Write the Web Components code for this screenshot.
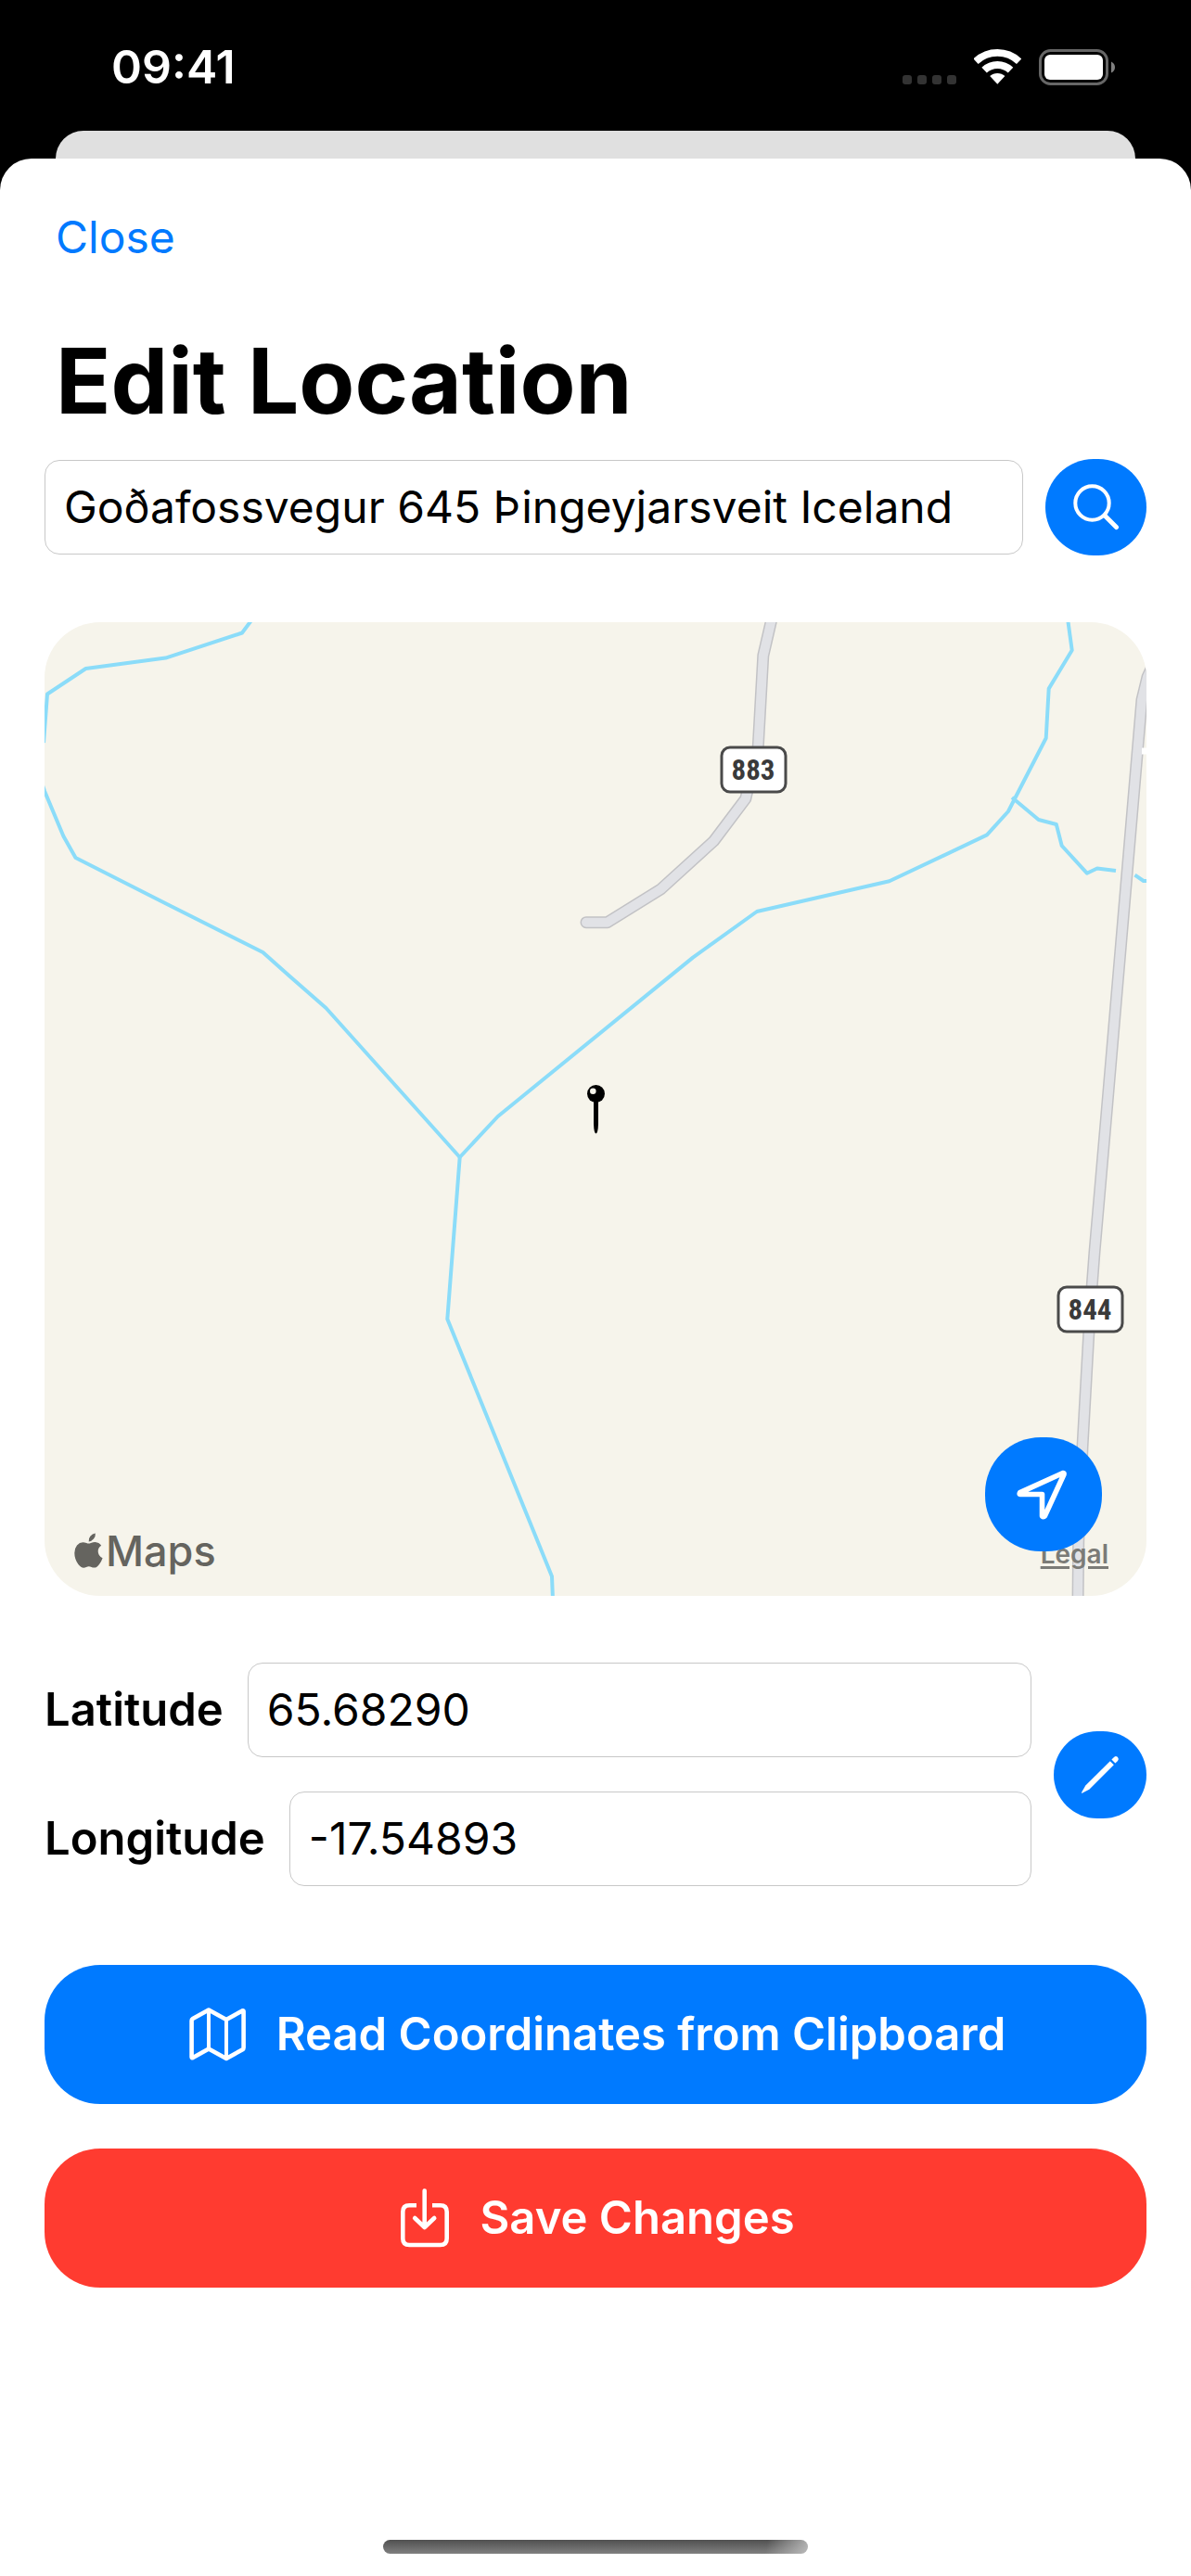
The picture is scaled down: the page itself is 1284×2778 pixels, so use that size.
<!DOCTYPE html>
<html lang="en">
<head>
<meta charset="utf-8">
<meta name="viewport" content="width=device-width, initial-scale=1">
<title>Edit Location</title>
<style>
  html {
    background-color: black;
  }

  body {
    color: black;
    font-family: Inter, Roboto, "Liberation Sans", sans-serif;
    font-size: 49px;
    line-height: 60px;
    margin: 0;
    padding: 0;
  }
</style>
</head>
<body>

<location-editor></location-editor>

<script>
// Icons
// Shared by the buttons
const ICONS = {
  search: `
    <svg width="50" height="50" viewBox="0 0 50 50" fill="none" stroke="currentColor" stroke-linecap="round">
      <circle cx="20.500" cy="20.500" r="18.200" stroke-width="4"/>
      <path d="M34 34 L46.500 46.500" stroke-width="5"/>
    </svg>`,
  location: `
    <svg width="58" height="54" viewBox="0 0 58 54" fill="none" stroke="currentColor" stroke-width="5.600" stroke-linecap="round" stroke-linejoin="round">
      <path d="M50 3.500 L3.600 24.600 Q2.500 26.500 4 26.500 H27.500 V50 Q29 51.500 30.300 50 L51 5 Q51.500 3.300 50 3.500 Z"/>
    </svg>`,
  pencil: `
    <svg width="42" height="42" viewBox="0 0 42 42" fill="currentColor">
      <path d="M31.800 6.200 L35.800 10.200 L9.300 36.700 L1.600 40.800 Q.600 41 1 40 L5.300 32.600 Z"/>
      <path d="M33.400 4.600 L36 2 Q38 .200 40 2.100 Q41.800 4 40 6 L37.400 8.600 Z"/>
    </svg>`,
  map: `
    <svg width="62" height="60" viewBox="0 0 62 60" fill="none" stroke="currentColor" stroke-width="4.600" stroke-linecap="round" stroke-linejoin="round">
      <path d="M21 3.500 L3.800 13 Q2.600 13.700 2.600 15 V54.300 Q2.700 55.700 4 55 L21 45.500 L40 56 L57.500 46.200 Q58.600 45.500 58.600 44.200 V5 Q58.500 3.800 57.200 4.400 L40 14 Z"/>
      <path d="M21 4 V45 M40 14 V55" stroke-width="4"/>
    </svg>`,
  save: `
    <svg width="54" height="64" viewBox="0 0 54 64" fill="none" stroke="currentColor" stroke-width="4.600" stroke-linejoin="round">
      <path d="M18 18.200 H10.300 Q3.300 18.200 3.300 25.200 V54 Q3.300 61 10.300 61 H43.700 Q50.700 61 50.700 54 V25.200 Q50.700 18.200 43.700 18.200 H35"/>
      <path d="M26.700 2.500 V42 M16.200 32 L26.700 42 L37.200 32" stroke-linecap="round"/>
    </svg>`
};

// Status bar
// Time, signal, wifi, battery
class StatusBar extends HTMLElement {
  constructor() {
    super();

    const template = document.createElement( 'template' );
    template.innerHTML = `
    <style>
    :host {
      align-items: center;
      color: white;
      display: flex;
      flex-direction: row;
      justify-content: space-between;
      padding: 42px 82px 39px 120px;
    }

    time {
      font-size: 50px;
      font-weight: 600;
    }

    div {
      align-items: flex-end;
      display: flex;
      gap: 19px;
    }

    svg {
      display: block;
    }
    </style>
    <time><slot></slot></time>
    <div>
      <svg width="58" height="11" viewBox="0 0 58 11" fill="#333333">
        <rect x="0" width="10" height="10" rx="3"/>
        <rect x="16" width="10" height="10" rx="3"/>
        <rect x="32" width="10" height="10" rx="3"/>
        <rect x="48" width="10" height="10" rx="3"/>
      </svg>
      <svg width="51" height="39" viewBox="0 0 51 39" fill="none" stroke="white">
        <path d="M2 13.200 A33.800 33.800 0 0 1 48.600 13.200" stroke-width="7.600"/>
        <path d="M11.100 22.700 A20.700 20.700 0 0 1 39.500 22.700" stroke-width="8"/>
        <path d="M25.300 37.700 L17.200 29.100 A11.800 11.800 0 0 1 33.400 29.100 Z" fill="white" stroke="none"/>
      </svg>
      <svg width="82" height="39" viewBox="0 0 82 39">
        <rect x="1.500" y="1.500" width="72" height="36" rx="11" fill="none" stroke="#666666" stroke-width="3"/>
        <rect x="6" y="6" width="63" height="27" rx="6" fill="white"/>
        <path d="M78 13.500 Q82 15.500 82 19.500 Q82 23.500 78 25.500 Z" fill="#808080"/>
      </svg>
    </div>
    `;

    this._shadowRoot = this.attachShadow( {mode: 'open'} );
    this._shadowRoot.appendChild( template.content.cloneNode( true ) );
  }
}

window.customElements.define( 'status-bar', StatusBar );

// Modal sheet
// Sits over the edge of the previous card
class ModalSheet extends HTMLElement {
  constructor() {
    super();

    const template = document.createElement( 'template' );
    template.innerHTML = `
    <style>
    :host {
      display: flex;
      flex-direction: column;
      flex-grow: 1;
    }

    .behind {
      background-color: #e0e0e0;
      border-radius: 30px 30px 0 0;
      height: 64px;
      margin: 0 60px -34px 60px;
    }

    .sheet {
      background-color: white;
      border-radius: 34px 34px 0 0;
      display: flex;
      flex-direction: column;
      flex-grow: 1;
      padding: 55px 48px 24px 48px;
      position: relative;
    }

    header {
      display: flex;
      flex-direction: column;
      align-items: flex-start;
      gap: 65px;
      padding: 0 12px 24px 12px;
    }

    button {
      background: none;
      border: none;
      color: #007aff;
      cursor: pointer;
      font: inherit;
      font-size: 48px;
      margin: 0;
      padding: 0;
    }

    h1 {
      font-size: 98px;
      font-weight: 700;
      line-height: 120px;
      margin: 0;
    }
    </style>
    <div class="behind"></div>
    <div class="sheet">
      <header>
        <button type="button">Close</button>
        <h1></h1>
      </header>
      <slot></slot>
    </div>
    `;

    this._shadowRoot = this.attachShadow( {mode: 'open'} );
    this._shadowRoot.appendChild( template.content.cloneNode( true ) );

    this.$heading = this._shadowRoot.querySelector( 'h1' );
    this.$close = this._shadowRoot.querySelector( 'button' );
    this.$close.addEventListener( 'click', () => {
      this.dispatchEvent( new CustomEvent( 'close' ) );
    } );
  }

  static get observedAttributes() {
    return ['heading'];
  }

  attributeChangedCallback( name, oldValue, newValue ) {
    this.$heading.textContent = newValue;
  }
}

window.customElements.define( 'modal-sheet', ModalSheet );

// Round button
// Size comes from --width and --height
class RoundButton extends HTMLElement {
  constructor() {
    super();

    const template = document.createElement( 'template' );
    template.innerHTML = `
    <style>
    :host {
      display: block;
      flex-shrink: 0;
    }

    button {
      align-items: center;
      background-color: #007aff;
      border: none;
      border-radius: 60px;
      color: white;
      cursor: pointer;
      display: flex;
      height: var( --height, 104px );
      justify-content: center;
      padding: 0;
      width: var( --width, 109px );
    }

    svg {
      display: block;
    }
    </style>
    <button type="button"></button>
    `;

    this._shadowRoot = this.attachShadow( {mode: 'open'} );
    this._shadowRoot.appendChild( template.content.cloneNode( true ) );
    this.$button = this._shadowRoot.querySelector( 'button' );
  }

  static get observedAttributes() {
    return ['icon', 'label'];
  }

  attributeChangedCallback( name, oldValue, newValue ) {
    switch( name ) {
      case 'icon':
        this.$button.innerHTML = ICONS[newValue];
        break;
      case 'label':
        this.$button.setAttribute( 'aria-label', newValue );
        break;
    }
  }
}

window.customElements.define( 'round-button', RoundButton );

// Action button
// Full width, icon and text
class ActionButton extends HTMLElement {
  constructor() {
    super();

    const template = document.createElement( 'template' );
    template.innerHTML = `
    <style>
    :host {
      display: block;
    }

    button {
      align-items: center;
      background-color: var( --action-color, #007aff );
      border: none;
      border-radius: 60px;
      box-sizing: border-box;
      color: white;
      cursor: pointer;
      display: flex;
      font: inherit;
      font-weight: 600;
      gap: 32px;
      justify-content: center;
      min-height: 150px;
      padding: 24px 48px 24px 52px;
      width: 100%;
    }

    .icon {
      display: flex;
    }
    </style>
    <button type="button">
      <span class="icon"></span>
      <slot></slot>
    </button>
    `;

    this._shadowRoot = this.attachShadow( {mode: 'open'} );
    this._shadowRoot.appendChild( template.content.cloneNode( true ) );
    this.$icon = this._shadowRoot.querySelector( '.icon' );
  }

  static get observedAttributes() {
    return ['icon'];
  }

  attributeChangedCallback( name, oldValue, newValue ) {
    this.$icon.innerHTML = ICONS[newValue];
  }
}

window.customElements.define( 'action-button', ActionButton );

// Text field
// Visible label, or aria-label when "hide-label" is set
class TextField extends HTMLElement {
  constructor() {
    super();

    const template = document.createElement( 'template' );
    template.innerHTML = `
    <style>
    :host {
      align-items: center;
      display: flex;
      flex-direction: row;
      gap: 26px;
      min-width: 0;
    }

    :host( [hide-label] ) label {
      display: none;
    }

    label {
      font-weight: 600;
    }

    input {
      background-color: white;
      border: solid 1px #c8c8c8;
      border-radius: 16px;
      box-sizing: border-box;
      color: inherit;
      flex-grow: 1;
      font: inherit;
      font-size: 48px;
      margin: 0;
      min-width: 0;
      outline: none;
      padding: 20px;
      width: 0;
    }
    </style>
    <label for="field"></label>
    <input id="field" type="text">
    `;

    this._shadowRoot = this.attachShadow( {mode: 'open'} );
    this._shadowRoot.appendChild( template.content.cloneNode( true ) );
    this.$label = this._shadowRoot.querySelector( 'label' );
    this.$input = this._shadowRoot.querySelector( 'input' );
  }

  static get observedAttributes() {
    return ['label', 'value'];
  }

  attributeChangedCallback( name, oldValue, newValue ) {
    switch( name ) {
      case 'label':
        this.$label.textContent = newValue;
        this.$input.setAttribute( 'aria-label', newValue );
        break;
      case 'value':
        this.value = newValue;
        break;
    }
  }

  get value() {
    return this.$input.value;
  }

  set value( text ) {
    this.$input.value = text;
  }
}

window.customElements.define( 'text-field', TextField );

// Map
// Slotted content floats in the bottom right corner
class LocationMap extends HTMLElement {
  constructor() {
    super();

    const template = document.createElement( 'template' );
    template.innerHTML = `
    <style>
    :host {
      aspect-ratio: 1188 / 1050;
      background-color: #f6f4eb;
      border-radius: 60px;
      display: block;
      overflow: hidden;
      position: relative;
    }

    .map {
      display: block;
      height: 100%;
      width: 100%;
    }

    .shield {
      fill: #3a3a3a;
      font-family: "Liberation Sans Narrow", "Roboto Condensed", Roboto, sans-serif;
      font-size: 31px;
      font-weight: 700;
    }

    .brand {
      align-items: center;
      bottom: 18px;
      color: #65645f;
      display: flex;
      font-size: 45px;
      font-weight: 500;
      gap: 1px;
      left: 32px;
      position: absolute;
    }

    a {
      bottom: 25px;
      color: #7b7b77;
      font-size: 28px;
      font-weight: 600;
      line-height: 40px;
      position: absolute;
      right: 41px;
      text-decoration-thickness: 3px;
      text-underline-offset: 3px;
    }

    .action {
      bottom: 48px;
      position: absolute;
      right: 48px;
    }
    </style>
    <svg class="map" viewBox="0 0 1188 1050" preserveAspectRatio="xMidYMid slice">
      <g fill="none" stroke="#8bdcf9" stroke-width="4" stroke-linejoin="round">
        <path d="M226 -6 L213 11.500 L130.500 38.600 L44.500 50 L3 77.500 L-1 130"/>
        <path d="M-2 176 L0 182 L20.400 230.700 L33.500 254 L130 303 L235.400 356 L264 381.600 L303.400 416 L447.700 577"/>
        <path d="M447.700 577 L488.700 533 L699 361.600 L768 312 L910.800 279.300 L1016 229.400 L1039 204 L1045.400 191.500 L1079.700 125 L1082.700 71.600 L1107.700 30.300 L1103 -4"/>
        <path d="M1043 189 L1071.700 213 L1090.800 218 L1096.700 241 L1123.800 270.700 L1134.800 265.500 L1155 268"/>
        <path d="M1175.500 272.700 L1184.800 279 L1192 279"/>
        <path d="M447.700 577 L434.300 751.400 L547 1029 L548 1054"/>
      </g>
      <g fill="none" stroke="#c2c2c5" stroke-width="13" stroke-linecap="round" stroke-linejoin="round">
        <path d="M785 -8 L774.800 36 L769.300 134 L763 160 L755.800 190.400 L721.500 236 L664.300 288 L606.700 323.700 H584"/>
        <path d="M1200 36 L1189 59 L1183 83.700 L1145 529 L1132 679 L1129.300 715 L1125.800 767 L1119 889 L1114.700 992 L1114 1060"/>
      </g>
      <g fill="none" stroke="#e1e2e6" stroke-width="10" stroke-linecap="round" stroke-linejoin="round">
        <path d="M785 -8 L774.800 36 L769.300 134 L763 160 L755.800 190.400 L721.500 236 L664.300 288 L606.700 323.700 H584"/>
        <path d="M1200 36 L1189 59 L1183 83.700 L1145 529 L1132 679 L1129.300 715 L1125.800 767 L1119 889 L1114.700 992 L1114 1060"/>
      </g>
      <path d="M1183 139 H1192" stroke="white" stroke-width="7"/>
      <g fill="white" stroke="#4a4a4a" stroke-width="3">
        <rect x="730" y="135" width="69" height="48" rx="9"/>
        <rect x="1093" y="717" width="69" height="48" rx="9"/>
      </g>
      <text class="shield" x="764" y="170" text-anchor="middle">883</text>
      <text class="shield" x="1127" y="752" text-anchor="middle">844</text>
      <path d="M592 514 H597 V541 Q596.600 551.500 594.500 551.500 Q592.400 551.500 592 541 Z"/>
      <circle cx="594.500" cy="508.500" r="9.500"/>
      <circle cx="591.300" cy="505.700" r="3.300" fill="#f6f4eb"/>
    </svg>
    <div class="brand">
      <svg width="33" height="40" viewBox="0 0 33 40" fill="currentColor">
        <path d="M15.700 9.400 Q15.200 6 17.500 3.400 Q19.600 1 22.800 .500 Q23.200 3.800 21 6.600 Q18.800 9.300 15.700 9.400 Z"/>
        <path d="M29.200 13.700 Q25.600 16 25.700 20 Q25.900 25.400 30.600 27.200 Q29.400 30.800 27 34 Q24.500 37.700 21.400 37.600 Q20 37.600 18.600 36.900 Q15.800 35.700 13 36.900 Q11.500 37.600 10.200 37.700 Q7.200 37.700 4.400 34 Q.300 28.500 .300 21.800 Q.300 16.600 3 13.400 Q5.700 10.300 9.400 10.200 Q11.200 10.200 13.200 11 Q15.600 12 17.900 11 Q20.500 10 22.600 10 Q26.800 10.400 29.200 13.700 Z"/>
      </svg>
      <span>Maps</span>
    </div>
    <a href="#legal">Legal</a>
    <div class="action"><slot></slot></div>
    `;

    this._shadowRoot = this.attachShadow( {mode: 'open'} );
    this._shadowRoot.appendChild( template.content.cloneNode( true ) );
  }
}

window.customElements.define( 'location-map', LocationMap );

// Home indicator
class HomeIndicator extends HTMLElement {
  constructor() {
    super();

    const template = document.createElement( 'template' );
    template.innerHTML = `
    <style>
    :host {
      display: flex;
      justify-content: center;
      margin-top: auto;
    }

    div {
      background-image:
        linear-gradient( 100deg, transparent 90%, rgba( 200, 200, 200, 0.8 ) ),
        linear-gradient( #505050, #808080 );
      border-radius: 8px;
      height: 15px;
      width: 458px;
    }
    </style>
    <div></div>
    `;

    this._shadowRoot = this.attachShadow( {mode: 'open'} );
    this._shadowRoot.appendChild( template.content.cloneNode( true ) );
  }
}

window.customElements.define( 'home-indicator', HomeIndicator );

// Editor
// The whole screen
class LocationEditor extends HTMLElement {
  constructor() {
    super();

    const template = document.createElement( 'template' );
    template.innerHTML = `
    <style>
    :host {
      display: flex;
      flex-direction: column;
      min-height: 100vh;
    }

    .search {
      align-items: center;
      display: flex;
      gap: 24px;
    }

    .search text-field {
      flex-grow: 1;
    }

    location-map {
      margin: 72px 0;
    }

    location-map round-button {
      --height: 123px;
      --width: 126px;
    }

    .coordinates {
      align-items: center;
      display: flex;
      gap: 24px;
    }

    .coordinates round-button {
      --height: 94px;
      --width: 100px;
    }

    .fields {
      display: flex;
      flex-direction: column;
      flex-grow: 1;
      gap: 37px;
    }

    .actions {
      display: flex;
      flex-direction: column;
      gap: 48px;
      margin: 85px 0 48px 0;
    }

    .save {
      --action-color: #ff3b30;
    }
    </style>
    <status-bar>09:41</status-bar>
    <modal-sheet heading="Edit Location">
      <div class="search">
        <text-field hide-label label="Address" value="Goðafossvegur 645 Þingeyjarsveit Iceland"></text-field>
        <round-button icon="search" label="Search"></round-button>
      </div>
      <location-map>
        <round-button icon="location" label="Current location"></round-button>
      </location-map>
      <div class="coordinates">
        <div class="fields">
          <text-field label="Latitude" value="65.68290"></text-field>
          <text-field label="Longitude" value="-17.54893"></text-field>
        </div>
        <round-button icon="pencil" label="Edit coordinates"></round-button>
      </div>
      <div class="actions">
        <action-button icon="map">Read Coordinates from Clipboard</action-button>
        <action-button class="save" icon="save">Save Changes</action-button>
      </div>
      <home-indicator></home-indicator>
    </modal-sheet>
    `;

    this._shadowRoot = this.attachShadow( {mode: 'open'} );
    this._shadowRoot.appendChild( template.content.cloneNode( true ) );
  }
}

window.customElements.define( 'location-editor', LocationEditor );
</script>
</body>
</html>
